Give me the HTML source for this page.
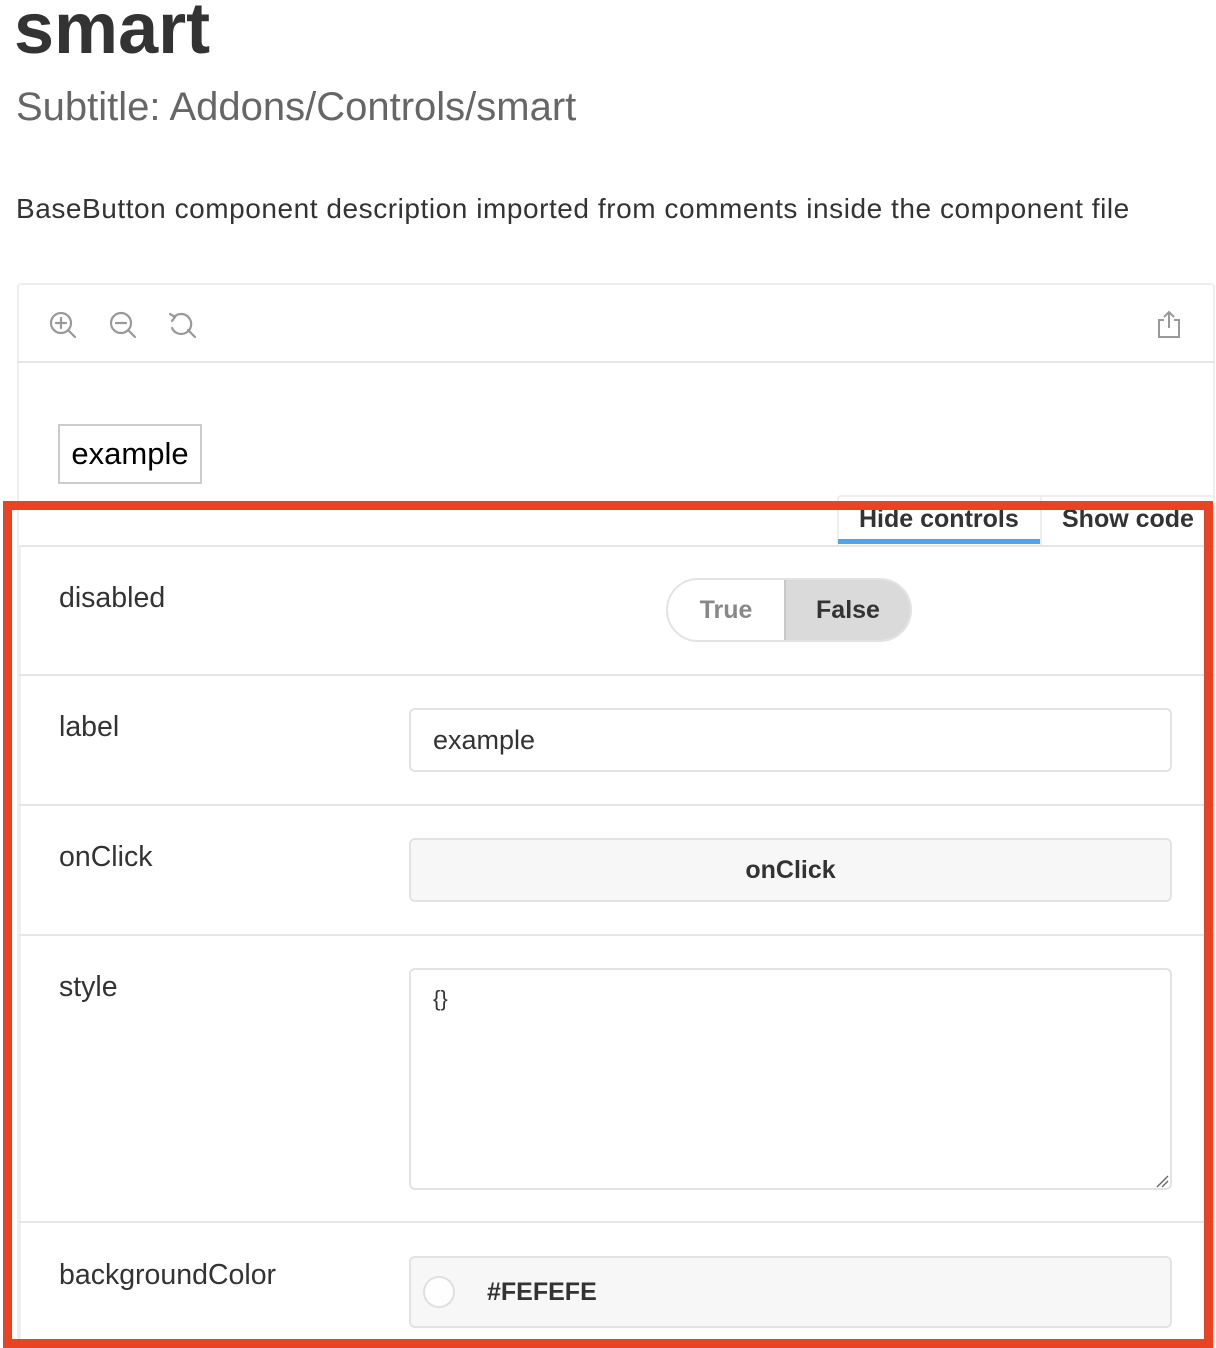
<!DOCTYPE html>
<html><head><meta charset="utf-8"><style>
*{box-sizing:border-box;margin:0;padding:0}
html,body{width:1216px;height:1348px;overflow:hidden}
body{background:#fff;font-family:"Liberation Sans",sans-serif;color:#333;position:relative}
.abs{position:absolute}
h1{position:absolute;left:14px;top:-12px;font-size:72px;font-weight:bold;color:#333;letter-spacing:0}
.sub{left:16px;top:85px;font-size:40px;color:#666}
.desc{left:16px;top:193px;font-size:28px;letter-spacing:0.55px;color:#333}
.panel{left:17px;top:283px;width:1198px;height:1065px;border:2px solid #eee;border-bottom:none;border-radius:4px}
.toolbar{left:17px;top:283px;width:1198px;height:80px;border-bottom:2px solid #e6e6e6}
.exbtn{left:58px;top:424px;width:144px;height:60px;border:2px solid #ccc;background:#fff;font-size:31px;color:#000;text-align:center;line-height:56px}
.tabs{left:837px;top:495px;width:378px;height:50px;border:2px solid #eee;border-bottom:none;border-radius:4px 4px 0 0;background:#fff}
.tab{top:505px;font-size:25px;font-weight:bold;color:#333}
.ctl{left:19px;top:545px;width:1196px;height:810px;border-top:2px solid #e6e6e6;border-left:2px solid #eee}
.row{position:absolute;left:19px;width:1196px;border-bottom:2px solid #e6e6e6}
.lbl{position:absolute;left:40px;font-size:28.5px;color:#333}
.inp{position:absolute;left:390px;width:763px;border:2px solid #e3e3e3;border-radius:6px;font-size:27px}
.red{left:3px;top:501px;width:1210px;height:847px;border:9px solid #e84424}
</style></head><body>
<h1>smart</h1>
<div class="abs sub">Subtitle: Addons/Controls/smart</div>
<div class="abs desc">BaseButton component description imported from comments inside the component file</div>
<div class="abs panel"></div>
<div class="abs toolbar"></div>
<svg class="abs" style="left:46px;top:308px" width="160" height="34" viewBox="0 0 160 34" fill="none" stroke="#999" stroke-width="2.2" stroke-linecap="round">
<circle cx="15" cy="15" r="10"/><line x1="22" y1="22" x2="29" y2="29"/><line x1="10" y1="15" x2="20" y2="15"/><line x1="15" y1="10" x2="15" y2="20"/>
<circle cx="75" cy="15" r="10"/><line x1="82" y1="22" x2="89" y2="29"/><line x1="70" y1="15" x2="80" y2="15"/>
<path d="M128 9 A10 10 0 1 1 126 20"/><path d="M124 6 L129 9 L126 13"/><line x1="142" y1="22" x2="149" y2="29"/>
</svg>
<svg class="abs" style="left:1156px;top:310px" width="26" height="30" viewBox="0 0 26 30" fill="none" stroke="#999" stroke-width="2">
<path d="M8 10 H3 V27 H23 V10 H18"/><path d="M13 2 V18"/><path d="M8 7 L13 2 L18 7"/>
</svg>
<div class="abs exbtn">example</div>
<div class="abs tabs"></div>
<div class="abs" style="left:1040px;top:495px;width:2px;height:50px;background:#eee"></div>
<div class="abs tab" style="left:859px">Hide controls</div>
<div class="abs tab" style="left:1062px">Show code</div>
<div class="abs" style="left:838px;top:539px;width:202px;height:5px;background:#4ea4ee"></div>
<div class="abs ctl"></div>
<div class="row" style="top:545px;height:131px">
 <div class="lbl" style="top:37px">disabled</div>
 <div style="position:absolute;left:647px;top:33px;width:246px;height:64px;border:2px solid #e3e3e3;border-radius:32px;overflow:hidden;background:#fff">
  <div style="position:absolute;left:0;top:0;width:116px;height:60px;text-align:center;line-height:60px;font-size:25px;font-weight:bold;color:#888">True</div>
  <div style="position:absolute;left:116px;top:-2px;width:128px;height:64px;background:#dadada;border:2px solid #c8c8c8;border-radius:0 32px 32px 0;text-align:center;line-height:60px;font-size:25px;font-weight:bold;color:#333">False</div>
 </div>
</div>
<div class="row" style="top:676px;height:130px">
 <div class="lbl" style="top:35px">label</div>
 <div class="inp" style="top:32px;height:64px;line-height:60px;padding-left:22px;background:#fff">example</div>
</div>
<div class="row" style="top:806px;height:130px">
 <div class="lbl" style="top:35px">onClick</div>
 <div class="inp" style="top:32px;height:64px;line-height:60px;text-align:center;background:#f7f7f7;font-weight:bold;font-size:25px">onClick</div>
</div>
<div class="row" style="top:936px;height:287px">
 <div class="lbl" style="top:35px">style</div>
 <div class="inp" style="top:32px;height:222px;padding:16px 22px;background:#fff;font-size:22px">{}</div>
 <svg style="position:absolute;left:1136px;top:238px" width="14" height="14" stroke="#666" stroke-width="1.3"><line x1="2" y1="13" x2="13" y2="2"/><line x1="7" y1="13" x2="13" y2="7"/></svg>
</div>
<div class="row" style="top:1223px;height:130px;border-bottom:none">
 <div class="lbl" style="top:36px">backgroundColor</div>
 <div class="inp" style="top:33px;height:72px;background:#f7f7f7">
  <div style="position:absolute;left:12px;top:18px;width:32px;height:32px;border-radius:50%;border:2px solid #e0e0e0;background:#fefefe"></div>
  <div style="position:absolute;left:76px;top:20px;font-weight:bold;font-size:25px;color:#333">#FEFEFE</div>
 </div>
</div>
<div class="abs red"></div>
</body></html>
